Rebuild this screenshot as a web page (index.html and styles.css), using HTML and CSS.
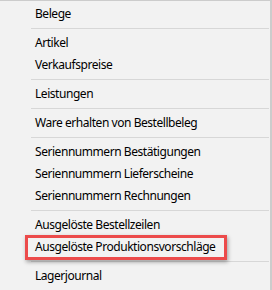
FILE: index.html
```html
<!DOCTYPE html>
<html>
<head>
<meta charset="utf-8">
<link rel="stylesheet" href="styles.css">
</head>
<body>
<div class="menu">
  <div class="item">Belege</div>
  <div class="sep"></div>
  <div class="item">Artikel</div>
  <div class="item">Verkaufspreise</div>
  <div class="sep"></div>
  <div class="item">Leistungen</div>
  <div class="sep"></div>
  <div class="item">Ware erhalten von Bestellbeleg</div>
  <div class="sep"></div>
  <div class="item">Seriennummern Bestätigungen</div>
  <div class="item">Seriennummern Lieferscheine</div>
  <div class="item">Seriennummern Rechnungen</div>
  <div class="sep"></div>
  <div class="item">Ausgelöste Bestellzeilen</div>
  <div class="item highlight">Ausgelöste Produktionsvorschläge</div>
  <div class="sep"></div>
  <div class="item">Lagerjournal</div>
</div>
</body>
</html>
```
FILE: styles.css
```css
html, body {
  margin: 0;
  padding: 0;
  background: #f2f2f2;
}
.menu {
  width: 272px;
  height: 290px;
  box-sizing: border-box;
  border-top: 1px solid #cccccc;
  border-right: 2px solid #cccccc;
  padding: 2px 0 0 0;
  background: #f2f2f2;
  font-family: "Noto Sans", "Open Sans", sans-serif;
  font-size: 12px;
  letter-spacing: -0.45px;
  color: #000;
  overflow: hidden;
}
.item {
  height: 22px;
  line-height: 22px;
  padding-left: 35px;
  white-space: nowrap;
  position: relative;
}
.sep {
  height: 7px;
  box-sizing: border-box;
  padding-top: 3px;
  margin-left: 31px;
  margin-right: 1px;
}
.sep::before {
  content: "";
  display: block;
  height: 1px;
  background: #d7d7d7;
}
.highlight::after {
  content: "";
  position: absolute;
  left: 25px;
  top: -1px;
  width: 202px;
  height: 25px;
  box-sizing: border-box;
  border: 3px solid #ec4b4b;
  box-shadow: 1px 2px 4px rgba(0,0,0,0.35);
}
```
